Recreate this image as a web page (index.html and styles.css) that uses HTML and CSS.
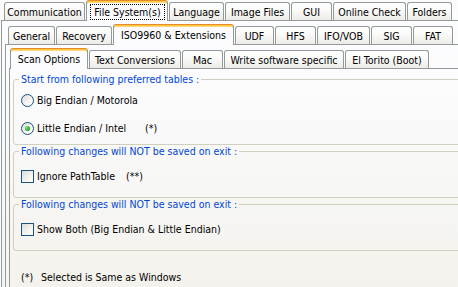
FILE: index.html
```html
<!DOCTYPE html>
<html>
<head>
<meta charset="utf-8">
<link rel="stylesheet" href="styles.css">
</head>
<body>
<div class="tc">
  <div class="tabrow r1">
    <div class="tab w-comm">Communication</div>
    <div class="tab sel w-fs"><span class="focus">File System(s)</span></div>
    <div class="tab w-lang">Language</div>
    <div class="tab w-img">Image Files</div>
    <div class="tab w-gui">GUI</div>
    <div class="tab w-online">Online Check</div>
    <div class="tab w-fold">Folders</div>
  </div>
  <div class="panel">
    <div class="tabrow r2">
      <div class="tab w-gen">General</div>
      <div class="tab w-rec">Recovery</div>
      <div class="tab sel w-iso">ISO9960 &amp; Extensions</div>
      <div class="tab w-udf">UDF</div>
      <div class="tab w-hfs">HFS</div>
      <div class="tab w-ifo">IFO/VOB</div>
      <div class="tab w-sig">SIG</div>
      <div class="tab w-fat">FAT</div>
    </div>
    <div class="panel">
      <div class="tabrow r3">
        <div class="tab sel w-scan">Scan Options</div>
        <div class="tab w-text">Text Conversions</div>
        <div class="tab w-mac">Mac</div>
        <div class="tab w-write">Write software specific</div>
        <div class="tab w-tor">El Torito (Boot)</div>
      </div>
      <div class="panel page">
        <fieldset class="group g1">
          <legend>Start from following preferred tables :</legend>
          <div class="opt"><span class="radio"></span><span>Big Endian / Motorola</span></div>
          <div class="opt second"><span class="radio on"></span><span class="lbl-intel">Little Endian / Intel</span><span>(*)</span></div>
        </fieldset>
        <fieldset class="group g2">
          <legend>Following changes will NOT be saved on exit :</legend>
          <div class="opt"><span class="check"></span><span class="lbl-path">Ignore PathTable</span><span>(**)</span></div>
        </fieldset>
        <fieldset class="group g2">
          <legend>Following changes will NOT be saved on exit :</legend>
          <div class="opt"><span class="check"></span><span>Show Both (Big Endian &amp; Little Endian)</span></div>
        </fieldset>
        <p class="note"><span class="star">(*)</span>Selected is Same as Windows</p>
      </div>
    </div>
  </div>
</div>
</body>
</html>
```
FILE: styles.css
```css
html, body {
  margin: 0;
  padding: 0;
  overflow: hidden;
  width: 458px;
  height: 287px;
}
body {
  background: #fcfcfd;
  font-family: "DejaVu Sans Condensed", "Liberation Sans", sans-serif;
  font-size: 10.5px;
  line-height: 13px;
  color: #000;
}
.tc {
  width: 640px;
  margin-left: 1px;
}
.tabrow {
  display: flex;
  align-items: flex-end;
  height: 20px;
  gap: 1px;
  position: relative;
  z-index: 1;
}
.r1, .r2 { padding-left: 3px; }
.r3 { padding-left: 1px; }
.tab {
  box-sizing: border-box;
  height: 18px;
  border: 1px solid #919b9c;
  border-bottom: 0;
  border-radius: 3px 3px 0 0;
  background: linear-gradient(#ffffff, #fbfbfa 40%, #ecebe6);
  display: flex;
  align-items: center;
  justify-content: center;
  white-space: nowrap;
  padding-top: 1px;
}
.tab.sel {
  height: 21px;
  margin-bottom: -1px;
  background: #fcfcfe;
  border-top: 1px solid #e68b2c;
  box-shadow: inset 0 1px 0 #ffc73c, inset 0 2px 0 #ffd77a;
  align-items: flex-start;
  padding-top: 4px;
}
.tab.sel.w-fs {
  padding-top: 0;
  align-items: stretch;
}
.focus {
  flex: 1;
  margin: 3px 2px 1px 3px;
  border: 1px dotted #000;
  display: flex;
  align-items: center;
  justify-content: center;
}
.w-comm { width: 81px; }
.w-fs { width: 82px; }
.w-lang { width: 55px; }
.w-img { width: 65px; }
.w-gui { width: 41px; }
.w-online { width: 73px; }
.w-fold { width: 45px; }
.w-gen { width: 47px; }
.w-rec { width: 56px; }
.w-iso { width: 121px; }
.w-udf { width: 39px; }
.w-hfs { width: 41px; }
.w-ifo { width: 53px; }
.w-sig { width: 41px; }
.w-fat { width: 40px; }
.w-scan { width: 78px; }
.w-text { width: 92px; }
.w-mac { width: 41px; }
.w-write { width: 120px; }
.w-tor { width: 84px; }

.panel {
  border: 1px solid #919b9c;
  background: linear-gradient(#fcfcfe, #f4f3ee);
  padding: 3px 0 0 3px;
}
.panel.page {
  padding: 0;
  min-height: 260px;
  background: linear-gradient(#fcfcfe, #f3f2ec 220px);
}
.group {
  border: 1px solid #d0d0bf;
  border-radius: 3px;
  margin: 0 0 0 3px;
  width: 560px;
  min-width: 0;
  padding: 8px 0 11px 7px;
}
.group.g1 {
  margin-top: 4px;
  padding: 4px 0 6px 7px;
}
.group legend {
  color: #0046d5;
  padding: 0 2px;
  margin-left: -2px;
  line-height: 13px;
}
.opt {
  display: flex;
  align-items: center;
  height: 20px;
  white-space: nowrap;
}
.opt.second { margin-top: 8px; }
.radio, .check {
  box-sizing: border-box;
  width: 13px;
  height: 13px;
  border: 1px solid #1c5180;
  margin-right: 3px;
  flex: none;
  display: flex;
  align-items: center;
  justify-content: center;
}
.radio {
  border-radius: 50%;
  background: linear-gradient(135deg, #dcdcd7, #f6f6f3 60%, #ffffff);
}
.radio.on::after {
  content: "";
  width: 5px;
  height: 5px;
  border-radius: 50%;
  background: radial-gradient(circle at 35% 35%, #7be07a, #21a121 70%);
}
.check {
  background: linear-gradient(135deg, #dcdcd7, #f4f4f1 60%, #ffffff);
}
.lbl-intel {
  display: inline-block;
  width: 108px;
}
.lbl-path {
  display: inline-block;
  width: 89px;
}
.note {
  margin: 20px 0 0 0;
  padding-left: 11px;
  white-space: nowrap;
}
.star {
  display: inline-block;
  width: 20px;
}
```
